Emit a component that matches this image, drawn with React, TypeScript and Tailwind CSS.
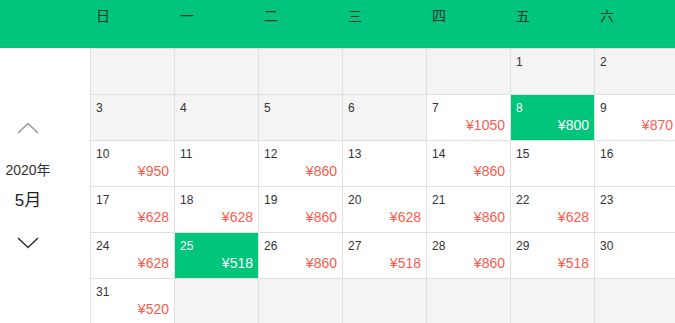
const weekdays = ["日", "一", "二", "三", "四", "五", "六"];

type Day = { day?: number; price?: number; past?: boolean; selected?: boolean };

const prices: Record<number, number> = {
  7: 1050, 8: 800, 9: 870, 10: 950, 12: 860, 14: 860, 17: 628, 18: 628, 19: 860,
  20: 628, 21: 860, 22: 628, 24: 628, 25: 518, 26: 860, 27: 518, 28: 860, 29: 518, 31: 520,
};

const selectedDays = [8, 25];

function buildDays(): Day[] {
  const cells: Day[] = [];
  for (let i = 0; i < 5; i++) cells.push({ past: true });
  for (let d = 1; d <= 31; d++) {
    cells.push({ day: d, price: prices[d], past: d < 7, selected: selectedDays.includes(d) });
  }
  while (cells.length < 42) cells.push({ past: true });
  return cells;
}

function Chevron({ up, color }: { up?: boolean; color: string }) {
  return (
    <svg width="22" height="12" viewBox="0 0 22 12" fill="none">
      <polyline
        points={up ? "1,11 11,1.5 21,11" : "1,1 11,10.5 21,1"}
        stroke={color}
        strokeWidth="1.6"
        fill="none"
      />
    </svg>
  );
}

export default function App() {
  const days = buildDays();
  return (
    <div className="w-[675px] h-[323px] overflow-hidden bg-white font-['Liberation_Sans','Noto_Sans_CJK_SC',sans-serif]">
      {/* week header */}
      <div className="flex h-12 bg-[#00c57a]">
        <div className="w-[90px] shrink-0" />
        {weekdays.map((w) => (
          <div key={w} className="w-[84px] shrink-0 pl-[6px] pt-[6px] text-[14px] leading-[20px] text-[#333]">
            {w}
          </div>
        ))}
      </div>

      <div className="flex">
        {/* month switcher */}
        <div className="w-[90px] shrink-0">
          <div className="w-[56px] flex flex-col items-center pt-[74px]">
            <Chevron up color="#9a9a9a" />
            <div className="mt-[28px] text-[14px] leading-[17px] text-[#333]">2020年</div>
            <div className="mt-[11px] text-[17px] leading-[21px] text-[#222]">5月</div>
            <div className="mt-[26px]">
              <Chevron color="#333" />
            </div>
          </div>
        </div>

        {/* days grid */}
        <div className="grid grid-cols-[repeat(7,84px)] shrink-0 border-t border-[#e0e0e0]">
          {days.map((c, i) => (
            <div
              key={i}
              className={
                "h-[46px] border-l border-b border-[#e0e0e0] px-[5px] pt-[5px] " +
                (c.selected ? "bg-[#00c57a] text-white" : c.past ? "bg-[#f4f4f4] text-[#333]" : "bg-white text-[#333]")
              }
            >
              {c.day !== undefined && (
                <>
                  <div className="text-[12px] leading-[16px]">{c.day}</div>
                  {c.price !== undefined && (
                    <div
                      className={
                        "text-right text-[14px] leading-[18px] " +
                        (c.selected ? "text-white" : "text-[#ff5a4b]")
                      }
                    >
                      ¥{c.price}
                    </div>
                  )}
                </>
              )}
            </div>
          ))}
        </div>
      </div>
    </div>
  );
}
